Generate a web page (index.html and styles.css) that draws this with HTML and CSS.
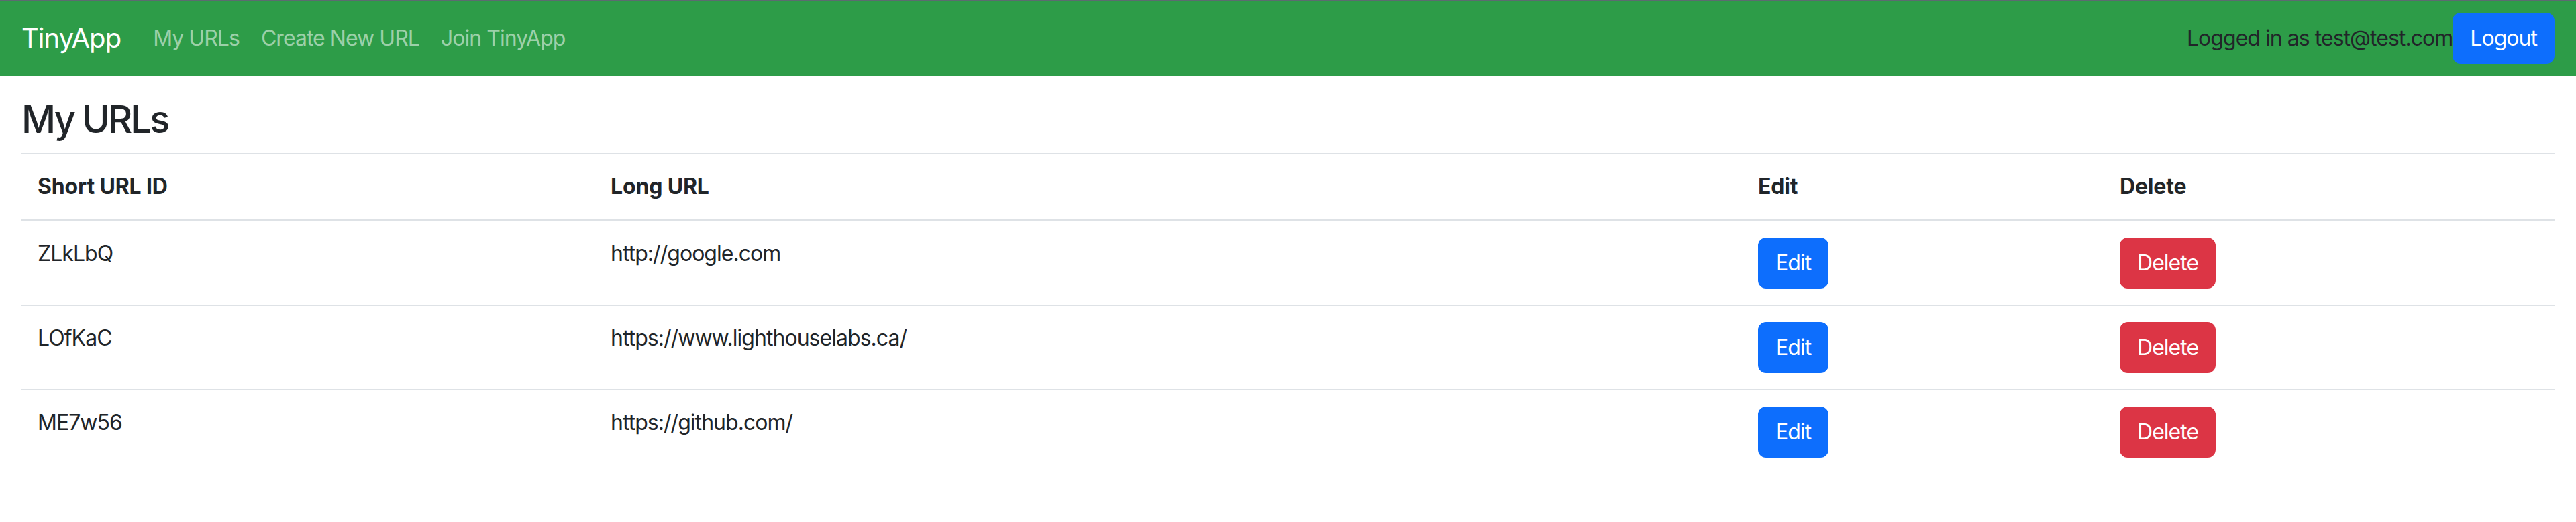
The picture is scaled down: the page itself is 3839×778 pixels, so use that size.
FILE: index.html
```html
<!DOCTYPE html>
<html lang="en">
<head>
<meta charset="utf-8">
<title>TinyApp</title>
<link rel="stylesheet" href="styles.css">
</head>
<body>
<nav class="navbar">
  <a class="brand" href="#">TinyApp</a>
  <div class="nav-links">
    <a class="nav-link" href="#">My URLs</a>
    <a class="nav-link" href="#">Create New URL</a>
    <a class="nav-link" href="#">Join TinyApp</a>
  </div>
  <div class="nav-user">
    <span class="user-text">Logged in as test@test.com</span>
    <button class="btn btn-primary" type="button">Logout</button>
  </div>
</nav>
<main class="container">
  <h3 class="title">My URLs</h3>
  <table class="url-table">
    <colgroup>
      <col class="col-id">
      <col class="col-long">
      <col class="col-edit">
      <col class="col-delete">
    </colgroup>
    <thead>
      <tr>
        <th>Short URL ID</th>
        <th>Long URL</th>
        <th>Edit</th>
        <th>Delete</th>
      </tr>
    </thead>
    <tbody>
      <tr>
        <td>ZLkLbQ</td>
        <td>http://google.com</td>
        <td><button class="btn btn-primary" type="button">Edit</button></td>
        <td><button class="btn btn-danger" type="button">Delete</button></td>
      </tr>
      <tr>
        <td>LOfKaC</td>
        <td>https://www.lighthouselabs.ca/</td>
        <td><button class="btn btn-primary" type="button">Edit</button></td>
        <td><button class="btn btn-danger" type="button">Delete</button></td>
      </tr>
      <tr>
        <td>ME7w56</td>
        <td>https://github.com/</td>
        <td><button class="btn btn-primary" type="button">Edit</button></td>
        <td><button class="btn btn-danger" type="button">Delete</button></td>
      </tr>
    </tbody>
  </table>
</main>
</body>
</html>
```

FILE: styles.css
```css
* {
  box-sizing: border-box;
}

html, body {
  margin: 0;
  padding: 0;
}

body {
  font-family: "Inter", "Liberation Sans", sans-serif;
  font-size: 32px;
  line-height: 1.5;
  letter-spacing: -0.03em;
  color: #212529;
  background: #ffffff;
  border-top: 1px solid #5b6b70;
}

.navbar {
  display: flex;
  align-items: center;
  height: 112px;
  padding: 16px 32px;
  background: #2d9c48;
}

.brand {
  font-size: 40px;
  line-height: 60px;
  padding: 10px 0;
  margin-right: 32px;
  color: #ffffff;
  text-decoration: none;
}

.nav-links {
  display: flex;
}

.nav-link {
  display: block;
  padding: 16px;
  line-height: 48px;
  color: rgba(255, 255, 255, 0.55);
  text-decoration: none;
}

.nav-user {
  margin-left: auto;
  display: flex;
  align-items: center;
}

.user-text {
  color: #212529;
}

.btn {
  display: inline-block;
  font-family: inherit;
  font-size: 32px;
  line-height: 48px;
  letter-spacing: inherit;
  padding: 12px 24px;
  border: 2px solid transparent;
  border-radius: 12px;
  color: #ffffff;
  cursor: pointer;
}

.btn-primary {
  background: #0d6efd;
  border-color: #0d6efd;
}

.btn-danger {
  background: #dc3545;
  border-color: #dc3545;
}

.container {
  padding: 32px 32px 0;
}

.title {
  font-size: 56px;
  font-weight: 500;
  line-height: 1.2;
  letter-spacing: -0.05em;
  margin: 0 0 16px;
}

.url-table {
  width: 100%;
  border-collapse: collapse;
  table-layout: fixed;
}

.col-id { width: 854px; }
.col-long { width: 1710px; }
.col-edit { width: 539px; }
.col-delete { width: 672px; }

.url-table th,
.url-table td {
  text-align: left;
  vertical-align: top;
  padding: 24px;
}

.url-table th {
  font-weight: 700;
  letter-spacing: -0.005em;
  border-top: 2px solid #dee2e6;
  border-bottom: 4px solid #dee2e6;
}

.url-table tbody tr + tr td {
  border-top: 2px solid #dee2e6;
}
```
